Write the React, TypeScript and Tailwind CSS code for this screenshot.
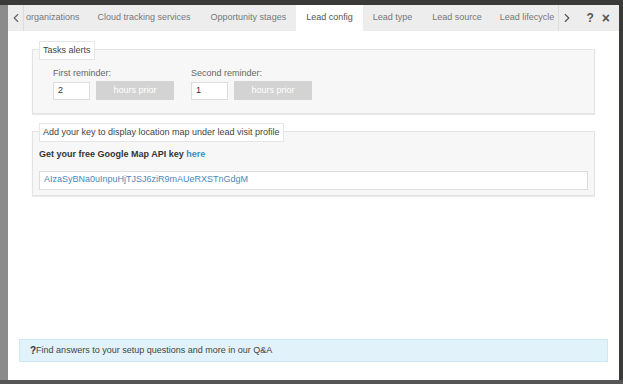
import { ChevronLeft, ChevronRight } from "lucide-react";

const tabs = ["Cloud tracking services", "Opportunity stages", "Lead config", "Lead type", "Lead source"];

function Reminder({ label, value }: { label: string; value: string }) {
  return (
    <div className="flex flex-col">
      <span className="text-[9px] leading-[12px] text-[#666]">{label}</span>
      <div className="mt-[2px] flex items-center gap-[6px]">
        <div className="flex h-[18px] w-[37px] items-center border border-[#ddd] bg-white pl-[4px] text-[9px] text-[#333]">{value}</div>
        <div className="flex h-[19px] w-[78px] items-center justify-center bg-[#d3d3d3] text-[9px] text-white">hours prior</div>
      </div>
    </div>
  );
}

export default function App() {
  return (
    <div className="relative h-[384px] w-[623px] overflow-hidden bg-[#3a3a38] font-['Liberation_Sans',Arial,sans-serif]">
      <div className="absolute left-0 top-[5px] h-[375px] w-[8px] bg-[#8b8b8b]" />
      <div className="absolute bottom-0 left-0 h-[4px] w-full bg-[#555]" />
      <div className="absolute left-[8px] top-[5px] flex h-[375px] w-[611px] flex-col bg-white">
        <div className="flex h-[26px] items-stretch whitespace-nowrap bg-[#ededed] text-[9px] text-[#777]">
          <div className="flex w-[16px] items-center justify-center border-r border-[#ddd]">
            <ChevronLeft size={14} strokeWidth={2} className="text-[#666]" />
          </div>
          <div className="flex items-center pl-[2px] pr-[8px]">organizations</div>
          {tabs.map((t) => (
            <div
              key={t}
              className={
                t === "Lead config"
                  ? "flex items-center bg-white px-[10px] text-[#555]"
                  : "flex items-center px-[10px]"
              }
            >
              {t}
            </div>
          ))}
          <div className="flex items-center pl-[8px] pr-[2px]">
            <span className="w-[56px] overflow-hidden">Lead lifecycle</span>
          </div>
          <div className="flex items-center border-l border-[#ddd] pl-[1px]">
            <ChevronRight size={14} strokeWidth={2} className="text-[#555]" />
          </div>
          <div className="ml-auto flex items-center gap-[8px] pr-[9px] text-[12px] font-bold text-[#555]">
            <span>?</span>
            <span className="text-[14px]">×</span>
          </div>
        </div>

        <div className="flex flex-col pl-[24px] pr-[24px]">
          <div className="relative mt-[18px] h-[65px] border border-[#e3e3e3] bg-[#f7f7f7] shadow-[0_1px_1px_rgba(0,0,0,0.08)]">
            <div className="absolute left-[6px] top-[-9px] border border-[#e6e6e6] bg-white px-[3px] py-[2px] text-[9px] leading-[13px] text-[#444]">
              Tasks alerts
            </div>
            <div className="flex gap-[17px] pl-[20px] pt-[17px]">
              <Reminder label="First reminder:" value="2" />
              <Reminder label="Second reminder:" value="1" />
            </div>
          </div>

          <div className="relative mt-[17px] h-[65px] border border-[#e3e3e3] bg-[#f7f7f7] shadow-[0_1px_1px_rgba(0,0,0,0.08)]">
            <div className="absolute left-[6px] top-[-9px] border border-[#e6e6e6] bg-white px-[3px] py-[2px] text-[9px] leading-[13px] text-[#444]">
              Add your key to display location map under lead visit profile
            </div>
            <div className="pl-[6px] pt-[16px] text-[9px] font-bold text-[#333]">
              Get your free Google Map API key <span className="text-[#3a8fc0]">here</span>
            </div>
            <div className="mx-[6px] mt-[9px] flex h-[19px] items-center border border-[#ddd] bg-white pl-[4px] text-[9px] text-[#4a8ab8]">
              AIzaSyBNa0uInpuHjTJSJ6ziR9mAUeRXSTnGdgM
            </div>
          </div>
        </div>

        <div className="mt-auto mb-[18px] ml-[11px] mr-[11px] flex h-[23px] items-center border border-[#cbe9f6] bg-[#e1f2fa] pl-[10px] text-[9px] text-[#444]">
          <span className="text-[10px] font-bold text-[#333]">?</span>Find answers to your setup questions and more in our Q&amp;A
        </div>
      </div>
    </div>
  );
}
